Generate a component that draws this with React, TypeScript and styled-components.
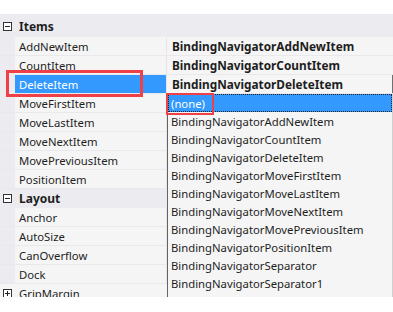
import React from 'react'
import styled, { createGlobalStyle } from 'styled-components'

const GlobalStyle = createGlobalStyle`
  html, body {
    margin: 0;
    padding: 0;
    background: #ffffff;
  }
  body {
    font-family: 'Noto Sans', 'Open Sans', sans-serif;
    font-size: 11.3px;
    color: #1e1e1e;
  }
`

const Frame = styled.div`
  position: relative;
  width: 393px;
  height: 312px;
  overflow: hidden;
  background: #ffffff;
`

const Grid = styled.div`
  display: flex;
  flex-direction: column;
  margin-top: 14px;
  height: 283px;
  overflow: hidden;
  background: #ececf0;
`

const CategoryRow = styled.div<{ tall?: boolean; collapsed?: boolean }>`
  display: flex;
  align-items: center;
  flex: 0 0 ${(p) => (p.tall ? '23px' : '19px')};
  padding-top: ${(p) => (p.tall ? '2px' : '0')};
  box-sizing: border-box;
  background: ${(p) => (p.collapsed ? '#f5f5f5' : '#ececf0')};
  font-weight: ${(p) => (p.collapsed ? 'normal' : 'bold')};
  font-size: ${(p) => (p.collapsed ? '11.3px' : '12px')};
`

const Toggle = styled.span`
  position: relative;
  box-sizing: border-box;
  width: 9px;
  height: 9px;
  margin: 0 7px 0 3px;
  border: 1px solid #333;
  background: #fff;
  &::before {
    content: '';
    position: absolute;
    left: 1px;
    top: 3px;
    width: 5px;
    height: 1px;
    background: #222;
  }
`

const PlusToggle = styled(Toggle)`
  &::after {
    content: '';
    position: absolute;
    left: 3px;
    top: 1px;
    width: 1px;
    height: 5px;
    background: #222;
  }
`

const PropRow = styled.div`
  display: flex;
  flex: 0 0 19px;
  box-sizing: border-box;
  border-bottom: 1px solid #e9e9ec;
`

const Gutter = styled.div`
  flex: 0 0 15px;
  background: #ececf0;
`

const NameCell = styled.div<{ selected?: boolean }>`
  flex: 0 0 152px;
  display: flex;
  align-items: center;
  padding-left: 4px;
  box-sizing: border-box;
  background: ${(p) => (p.selected ? '#3399ff' : '#f5f5f5')};
  color: ${(p) => (p.selected ? '#ffffff' : '#1e1e1e')};
  border-right: 1px solid #e6e6e9;
  white-space: nowrap;
`

const ValueCell = styled.div<{ edge?: boolean }>`
  flex: 1;
  display: flex;
  align-items: center;
  padding-left: 5px;
  background: #f5f5f5;
  font-weight: bold;
  font-size: 11.8px;
  white-space: nowrap;
  overflow: hidden;
  border-right: 1px solid ${(p) => (p.edge ? '#707070' : '#f5f5f5')};
`

const DropList = styled.div`
  position: absolute;
  left: 167px;
  top: 94px;
  right: 0;
  height: 203px;
  box-sizing: border-box;
  background: #f5f5f5;
  border-left: 1px solid #646464;
  border-right: 1px solid #d0d0d0;
`

const DropItem = styled.div<{ selected?: boolean }>`
  height: 18px;
  display: flex;
  align-items: center;
  padding-left: 3px;
  box-sizing: border-box;
  white-space: nowrap;
  background: ${(p) => (p.selected ? '#3399ff' : 'transparent')};
  color: ${(p) => (p.selected ? '#ffffff' : '#1e1e1e')};
  outline: ${(p) => (p.selected ? '1px dotted #222' : 'none')};
  outline-offset: -1px;
`

const Highlight = styled.div<{ thick: number }>`
  position: absolute;
  box-sizing: border-box;
  border: ${(p) => p.thick}px solid #ef3f47;
  pointer-events: none;
`

type Prop = { name: string; value?: string; selected?: boolean; edge?: boolean }

const items: Prop[] = [
  { name: 'AddNewItem', value: 'BindingNavigatorAddNewItem' },
  { name: 'CountItem', value: 'BindingNavigatorCountItem' },
  { name: 'DeleteItem', value: 'BindingNavigatorDeleteItem', selected: true, edge: true },
  { name: 'MoveFirstItem' },
  { name: 'MoveLastItem' },
  { name: 'MoveNextItem' },
  { name: 'MovePreviousItem' },
  { name: 'PositionItem' },
]

const layout: Prop[] = [
  { name: 'Anchor' },
  { name: 'AutoSize' },
  { name: 'CanOverflow' },
  { name: 'Dock' },
]

const options = [
  '(none)',
  'BindingNavigatorAddNewItem',
  'BindingNavigatorCountItem',
  'BindingNavigatorDeleteItem',
  'BindingNavigatorMoveFirstItem',
  'BindingNavigatorMoveLastItem',
  'BindingNavigatorMoveNextItem',
  'BindingNavigatorMovePreviousItem',
  'BindingNavigatorPositionItem',
  'BindingNavigatorSeparator',
  'BindingNavigatorSeparator1',
]

const Row: React.FC<{ prop: Prop }> = ({ prop }) => (
  <PropRow>
    <Gutter />
    <NameCell selected={prop.selected}>{prop.name}</NameCell>
    <ValueCell edge={prop.edge}>{prop.value}</ValueCell>
  </PropRow>
)

export default function App() {
  return (
    <Frame>
      <GlobalStyle />
      <Grid>
        <CategoryRow tall>
          <Toggle />
          Items
        </CategoryRow>
        {items.map((p) => (
          <Row key={p.name} prop={p} />
        ))}
        <CategoryRow>
          <Toggle />
          Layout
        </CategoryRow>
        {layout.map((p) => (
          <Row key={p.name} prop={p} />
        ))}
        <CategoryRow collapsed>
          <PlusToggle />
          GripMargin
        </CategoryRow>
      </Grid>
      <DropList>
        {options.map((o, i) => (
          <DropItem key={o} selected={i === 0}>
            {o}
          </DropItem>
        ))}
      </DropList>
      <Highlight thick={3} style={{ left: 6, top: 70, width: 137, height: 27 }} />
      <Highlight thick={2} style={{ left: 166, top: 93, width: 48, height: 22 }} />
    </Frame>
  )
}
